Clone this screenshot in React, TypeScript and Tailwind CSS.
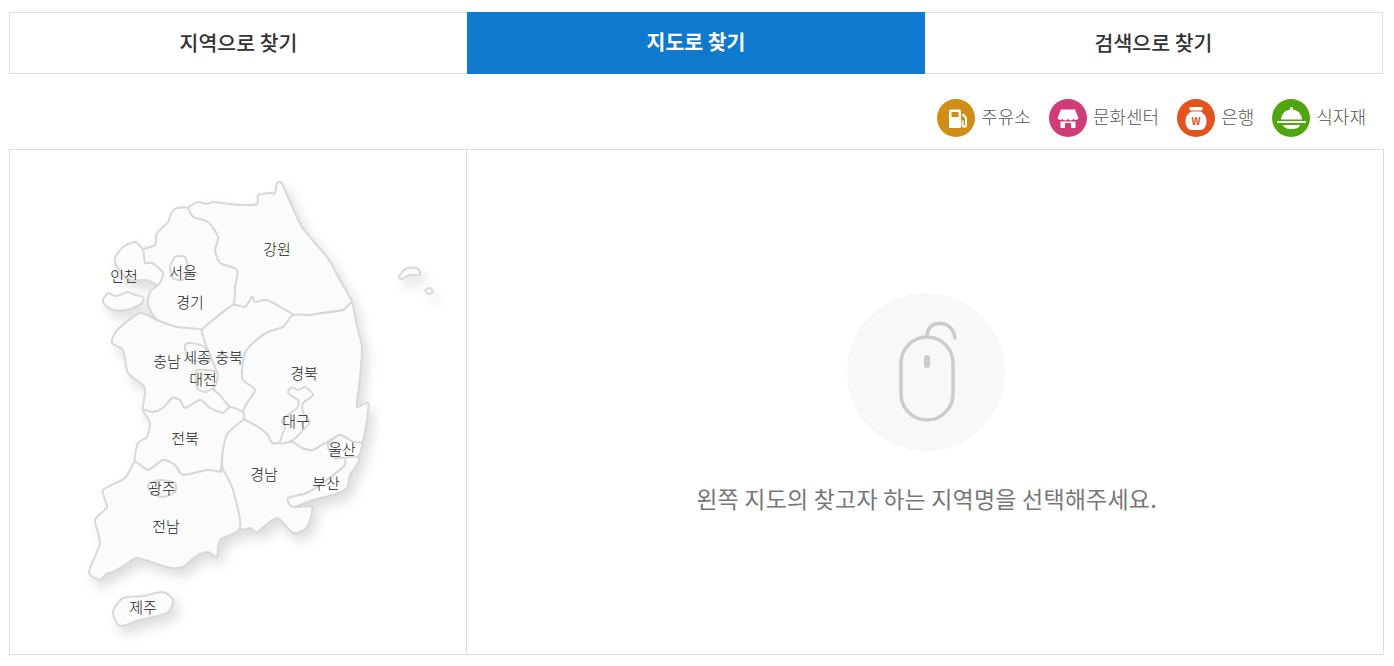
import React from "react";

type P = [number, number];

function smooth(pts: P[], closed = true): string {
  const n = pts.length;
  const at = (i: number) => pts[closed ? (i + n) % n : Math.max(0, Math.min(n - 1, i))];
  const k = 0.12;
  let d = `M${pts[0][0]} ${pts[0][1]}`;
  const last = closed ? n : n - 1;
  for (let i = 0; i < last; i++) {
    const p0 = at(i - 1), p1 = at(i), p2 = at(i + 1), p3 = at(i + 2);
    d += `C${(p1[0] + (p2[0] - p0[0]) * k).toFixed(1)} ${(p1[1] + (p2[1] - p0[1]) * k).toFixed(1)} ${(p2[0] - (p3[0] - p1[0]) * k).toFixed(1)} ${(p2[1] - (p3[1] - p1[1]) * k).toFixed(1)} ${p2[0]} ${p2[1]}`;
  }
  return d + (closed ? "Z" : "");
}

const regions: P[][] = [
  // 강원
  [[188,208],[198,202],[207,204],[213,202],[222,203],[240,205],[257,204],[258,195],[270,193],[275,193],[277,183],[282,183],[288,197],[302,227],[327,257],[340,280],[352,303],[343,310],[323,313],[310,315],[293,315],[280,307],[267,300],[255,302],[252,297],[245,307],[233,305],[235,287],[237,270],[220,263],[215,250],[218,237],[208,222],[193,217]],
  // 경기
  [[188,208],[177,208],[172,212],[168,222],[157,233],[155,245],[143,250],[145,263],[152,263],[163,273],[158,285],[150,292],[148,305],[157,320],[177,327],[202,330],[213,320],[233,305],[235,287],[237,270],[220,263],[215,250],[218,237],[208,222],[193,217]],
  // 인천
  [[115,258],[123,247],[135,242],[143,250],[145,263],[152,263],[163,273],[158,285],[147,280],[130,280],[117,267]],
  // 인천 섬
  [[103,300],[108,293],[115,296],[120,295],[128,292],[135,295],[143,297],[142,303],[127,310],[113,310],[105,305]],
  // 충남
  [[202,330],[177,327],[157,320],[140,313],[117,330],[112,343],[123,350],[128,373],[143,385],[145,393],[143,410],[153,412],[163,408],[172,398],[180,400],[185,408],[200,400],[210,408],[223,413],[230,407],[220,395],[213,388],[217,373],[210,355],[205,342]],
  // 충북
  [[202,330],[213,320],[233,305],[245,307],[252,297],[255,302],[267,300],[280,307],[293,315],[283,327],[268,332],[253,343],[245,353],[242,370],[243,380],[255,390],[247,403],[243,412],[230,407],[220,395],[213,388],[217,373],[210,355],[205,342]],
  // 경북
  [[293,315],[310,315],[323,313],[343,310],[352,303],[357,327],[362,347],[360,377],[357,403],[358,407],[368,403],[367,420],[362,443],[353,442],[340,435],[327,442],[313,450],[302,448],[292,442],[280,443],[272,443],[268,435],[258,427],[245,420],[243,412],[247,403],[255,390],[243,380],[242,370],[245,353],[253,343],[268,332],[283,327]],
  // 전북
  [[143,410],[150,423],[147,437],[138,443],[135,462],[148,470],[163,460],[175,465],[183,475],[208,470],[220,472],[223,450],[228,433],[243,420],[243,412],[230,407],[223,413],[210,408],[200,400],[185,408],[180,400],[172,398],[163,408],[153,412]],
  // 경남
  [[243,420],[245,420],[258,427],[268,435],[272,443],[280,443],[292,442],[302,448],[313,450],[327,442],[328,445],[333,457],[345,458],[345,465],[327,480],[307,493],[288,498],[293,507],[312,507],[307,527],[293,533],[277,518],[257,532],[250,528],[240,528],[233,490],[223,470],[223,450],[228,433]],
  // 전남
  [[135,462],[125,478],[103,490],[107,507],[95,520],[100,543],[89,572],[100,580],[106,574],[113,572],[125,565],[137,558],[160,565],[172,568],[183,567],[196,556],[208,552],[217,557],[220,540],[240,528],[233,490],[223,470],[220,472],[208,470],[183,475],[175,465],[163,460],[148,470]],
  // 울산
  [[328,445],[340,435],[353,442],[362,443],[358,457],[345,458],[333,457]],
  // 부산
  [[345,465],[345,458],[358,457],[358,463],[350,475],[347,488],[333,495],[313,500],[293,507],[288,498],[307,493],[327,480]],
  // 대구
  [[288,392],[292,387],[298,390],[305,387],[313,395],[303,403],[303,412],[310,422],[303,430],[293,440],[280,443],[285,427],[282,420],[297,408],[298,400],[290,395]],
  // 세종
  [[185,345],[190,343],[203,346],[210,355],[208,362],[190,360],[186,352]],
  // 대전
  [[197,370],[217,372],[215,386],[205,392],[197,388],[196,378]],
  // 서울
  [[170,267],[175,257],[185,257],[188,270],[183,280],[173,278]],
  // 광주
  [[148,485],[160,480],[175,483],[175,492],[163,497],[152,493]],
  // 제주
  [[113,612],[123,598],[143,596],[163,592],[173,600],[167,613],[140,620],[120,626]],
  // 울릉도
  [[399,277],[405,269],[417,268],[420,275],[410,275],[402,279]],
  // 독도
  [[425,290],[430,288],[433,292],[428,294]],
];

const labels: [string, number, number][] = [
  ["강원", 277, 249], ["인천", 124, 276], ["서울", 183, 272], ["경기", 190, 302],
  ["충남", 167, 361], ["세종", 197, 357], ["충북", 229, 357], ["대전", 203, 379],
  ["경북", 304, 373], ["대구", 296, 421], ["울산", 342, 449], ["부산", 326, 483],
  ["경남", 264, 474], ["전북", 185, 438], ["광주", 162, 488], ["전남", 166, 526], ["제주", 143, 607],
];

function KoreaMap() {
  return (
    <svg viewBox="10 150 456 504" className="block h-[504px] w-[456px]">
      <g className="drop-shadow-[5px_7px_6px_rgba(0,0,0,0.13)]">
        {regions.map((r, i) => (
          <path key={i} d={smooth(r)} fill="#fbfbfb" stroke="#d8d8d8" strokeWidth={2} strokeLinejoin="round" />
        ))}
      </g>
      {labels.map(([t, x, y]) => (
        <text key={t} x={x} y={y + 6} textAnchor="middle" fontSize={15} fontWeight={300} fill="#222222">
          {t}
        </text>
      ))}
    </svg>
  );
}

function GasIcon() {
  return (
    <svg viewBox="0 0 38 38" className="h-[38px] w-[38px] shrink-0">
      <circle cx="19" cy="19" r="19" fill="#d08e17" />
      <path d="M12 12.500a2 2 0 0 1 2-2h8a2 2 0 0 1 2 2V29H12Z" fill="#fff" />
      <rect x="14.500" y="13" width="7" height="5" fill="#d08e17" />
      <path d="M25.500 15l3.500 4v7a1.700 1.700 0 0 1-3.400 0v-4.500" fill="none" stroke="#fff" strokeWidth="2" />
    </svg>
  );
}

function StoreIcon() {
  return (
    <svg viewBox="0 0 38 38" className="h-[38px] w-[38px] shrink-0">
      <circle cx="19" cy="19" r="19" fill="#d13c78" />
      <path d="M12 10.500H26L29.500 19a2.800 2.800 0 0 1-5 .8 3 3 0 0 1-5.500 0 3 3 0 0 1-5.500 0 2.800 2.800 0 0 1-5-.8Z" fill="#fff" />
      <path d="M11.500 22.500H26.500V29H22V24H16V29H11.500Z" fill="#fff" />
    </svg>
  );
}

function BankIcon() {
  return (
    <svg viewBox="0 0 38 38" className="h-[38px] w-[38px] shrink-0">
      <circle cx="19" cy="19" r="19" fill="#e2531f" />
      <rect x="12.500" y="8" width="13" height="3.500" rx="1" fill="#fff" />
      <path d="M14.500 12.500h9C27 14.500 29.500 17 29.500 22c0 6-3 9-6 9h-9c-3 0-6-3-6-9 0-5 2.500-7.500 6-9.500Z" fill="#fff" />
      <text x="19" y="25.500" textAnchor="middle" fontSize="10" fontWeight="700" fill="#e2531f">W</text>
    </svg>
  );
}

function FoodIcon() {
  return (
    <svg viewBox="0 0 38 38" className="h-[38px] w-[38px] shrink-0">
      <circle cx="19" cy="19" r="19" fill="#4fa60f" />
      <circle cx="19.500" cy="9.500" r="1.500" fill="#fff" />
      <path d="M9 20.500C9.500 14 14 10.500 19.500 10.500S29.500 14 30 20.500Z" fill="#fff" />
      <rect x="5" y="22" width="29" height="2" rx="1" fill="#fff" />
      <path d="M11 26H28C27 29 24 30 19.500 30S12 29 11 26Z" fill="#fff" />
    </svg>
  );
}

const legend = [
  { label: "주유소", icon: <GasIcon /> },
  { label: "문화센터", icon: <StoreIcon /> },
  { label: "은행", icon: <BankIcon /> },
  { label: "식자재", icon: <FoodIcon /> },
];

export default function App() {
  return (
    <div className="h-[666px] w-[1394px] bg-white px-[9px] pt-3 font-['Noto_Sans_CJK_KR',sans-serif]">
      <div className="grid h-[62px] w-[1374px] grid-cols-[457px_458px_457px] border border-[#dddddd] text-[20.500px] font-medium text-[#333333]">
        <div className="flex items-center justify-center pb-[3px]">지역으로 찾기</div>
        <div className="-mt-px flex h-[62px] items-center justify-center bg-[#0f79cd] pb-[3px] font-bold text-white">지도로 찾기</div>
        <div className="flex items-center justify-center pb-[3px]">검색으로 찾기</div>
      </div>

      <div className="mt-[24px] flex h-[39px] w-[1375px] items-center justify-end gap-[18px] pr-[18px]">
        {legend.map((l) => (
          <div key={l.label} className="flex items-center gap-[6px] text-[18px] font-light text-[#555555]">
            {l.icon}
            <span className="pb-[3px]">{l.label}</span>
          </div>
        ))}
      </div>

      <div className="mt-[12px] flex h-[506px] w-[1375px] border border-[#dddddd]">
        <div className="h-full w-[457px] border-r border-[#dddddd]">
          <KoreaMap />
        </div>
        <div className="flex flex-1 flex-col items-center justify-center gap-[34px] pl-[3px]">
          <div className="mr-[2px] flex h-[158px] w-[158px] items-center justify-center rounded-full bg-[#f8f8f8]">
            <svg viewBox="0 0 158 158" className="h-[158px] w-[158px]" fill="none" stroke="#cccccc" strokeWidth="3.500">
              <rect x="54" y="44" width="52" height="83" rx="26" />
              <path d="M80 42C81 33 87 30.500 93 30.500C101 30.500 107 36 108 45" strokeLinecap="round" />
              <rect x="77" y="62" width="6" height="13" rx="3" fill="#cccccc" stroke="none" />
            </svg>
          </div>
          <p className="text-[23px] leading-[26px] font-normal tracking-[0.2px] text-[#777777]">왼쪽 지도의 찾고자 하는 지역명을 선택해주세요.</p>
        </div>
      </div>
    </div>
  );
}
